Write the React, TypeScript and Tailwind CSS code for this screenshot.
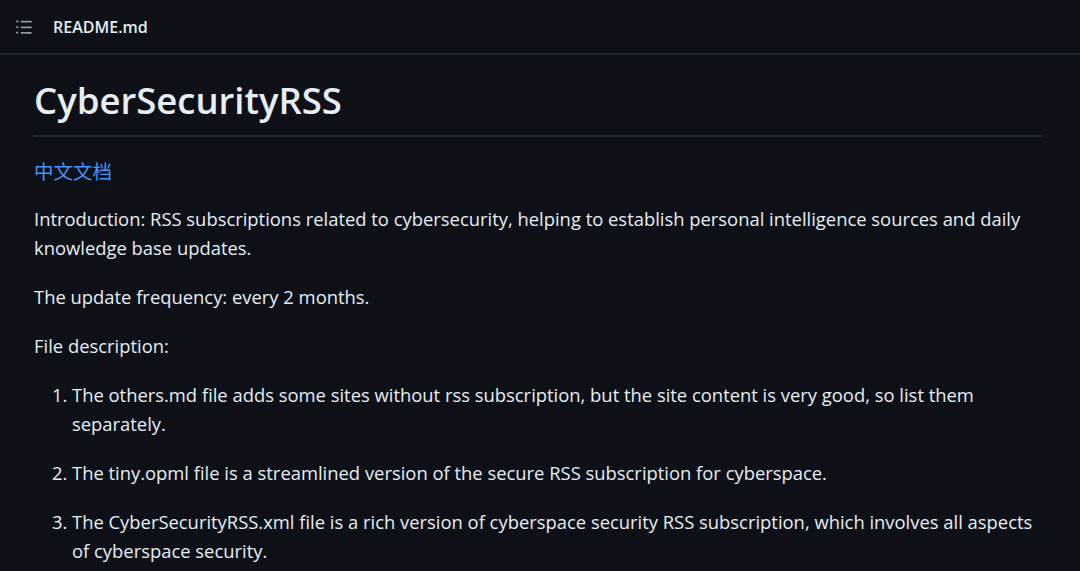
export default function App() {
  return (
    <div
      className="min-h-[571px] bg-[#0d1117] text-[#e6edf3]"
      style={{ fontFamily: '"Open Sans", "Noto Sans CJK SC", sans-serif' }}
    >
      {/* file header */}
      <div className="flex h-[55px] items-center border-b-2 border-[#21262d] pl-[15px]">
        <svg width="18" height="18" viewBox="0 0 16 16" fill="#9198a1" className="mr-[20px]">
          <path d="M5.75 2.5h8.5a.75.75 0 0 1 0 1.5h-8.5a.75.75 0 0 1 0-1.5Zm0 5h8.5a.75.75 0 0 1 0 1.5h-8.5a.75.75 0 0 1 0-1.5Zm0 5h8.5a.75.75 0 0 1 0 1.5h-8.5a.75.75 0 0 1 0-1.5ZM2 14a1 1 0 1 1 0-2 1 1 0 0 1 0 2Zm1-6a1 1 0 1 1-2 0 1 1 0 0 1 2 0ZM2 4a1 1 0 1 1 0-2 1 1 0 0 1 0 2Z" />
        </svg>
        <span className="text-[16px] font-semibold text-[#e6edf3]">README.md</span>
      </div>

      {/* markdown body */}
      <div className="pl-[34px] pr-[37px] pt-[22px] text-[18.4px] leading-[29px]">
        <h1 className="border-b-2 border-[#21262d] pb-[12px] text-[36.5px] font-semibold leading-[46px]">
          CyberSecurityRSS
        </h1>
        <p className="mt-[20px]">
          <a className="text-[19.5px] text-[#4493f8]">中文文档</a>
        </p>
        <p className="mt-[18px]">
          Introduction: RSS subscriptions related to cybersecurity, helping to establish personal intelligence sources and daily knowledge base updates.
        </p>
        <p className="mt-[20px]">The update frequency: every 2 months.</p>
        <p className="mt-[20px]">File description:</p>
        <ol className="mt-[20px] list-decimal pl-[38px]">
          <li>
            The others.md file adds some sites without rss subscription, but the site content is very good, so list them separately.
          </li>
          <li className="mt-[20px]">
            The tiny.opml file is a streamlined version of the secure RSS subscription for cyberspace.
          </li>
          <li className="mt-[20px]">
            The CyberSecurityRSS.xml file is a rich version of cyberspace security RSS subscription, which involves all aspects of cyberspace security.
          </li>
        </ol>
      </div>
    </div>
  )
}
